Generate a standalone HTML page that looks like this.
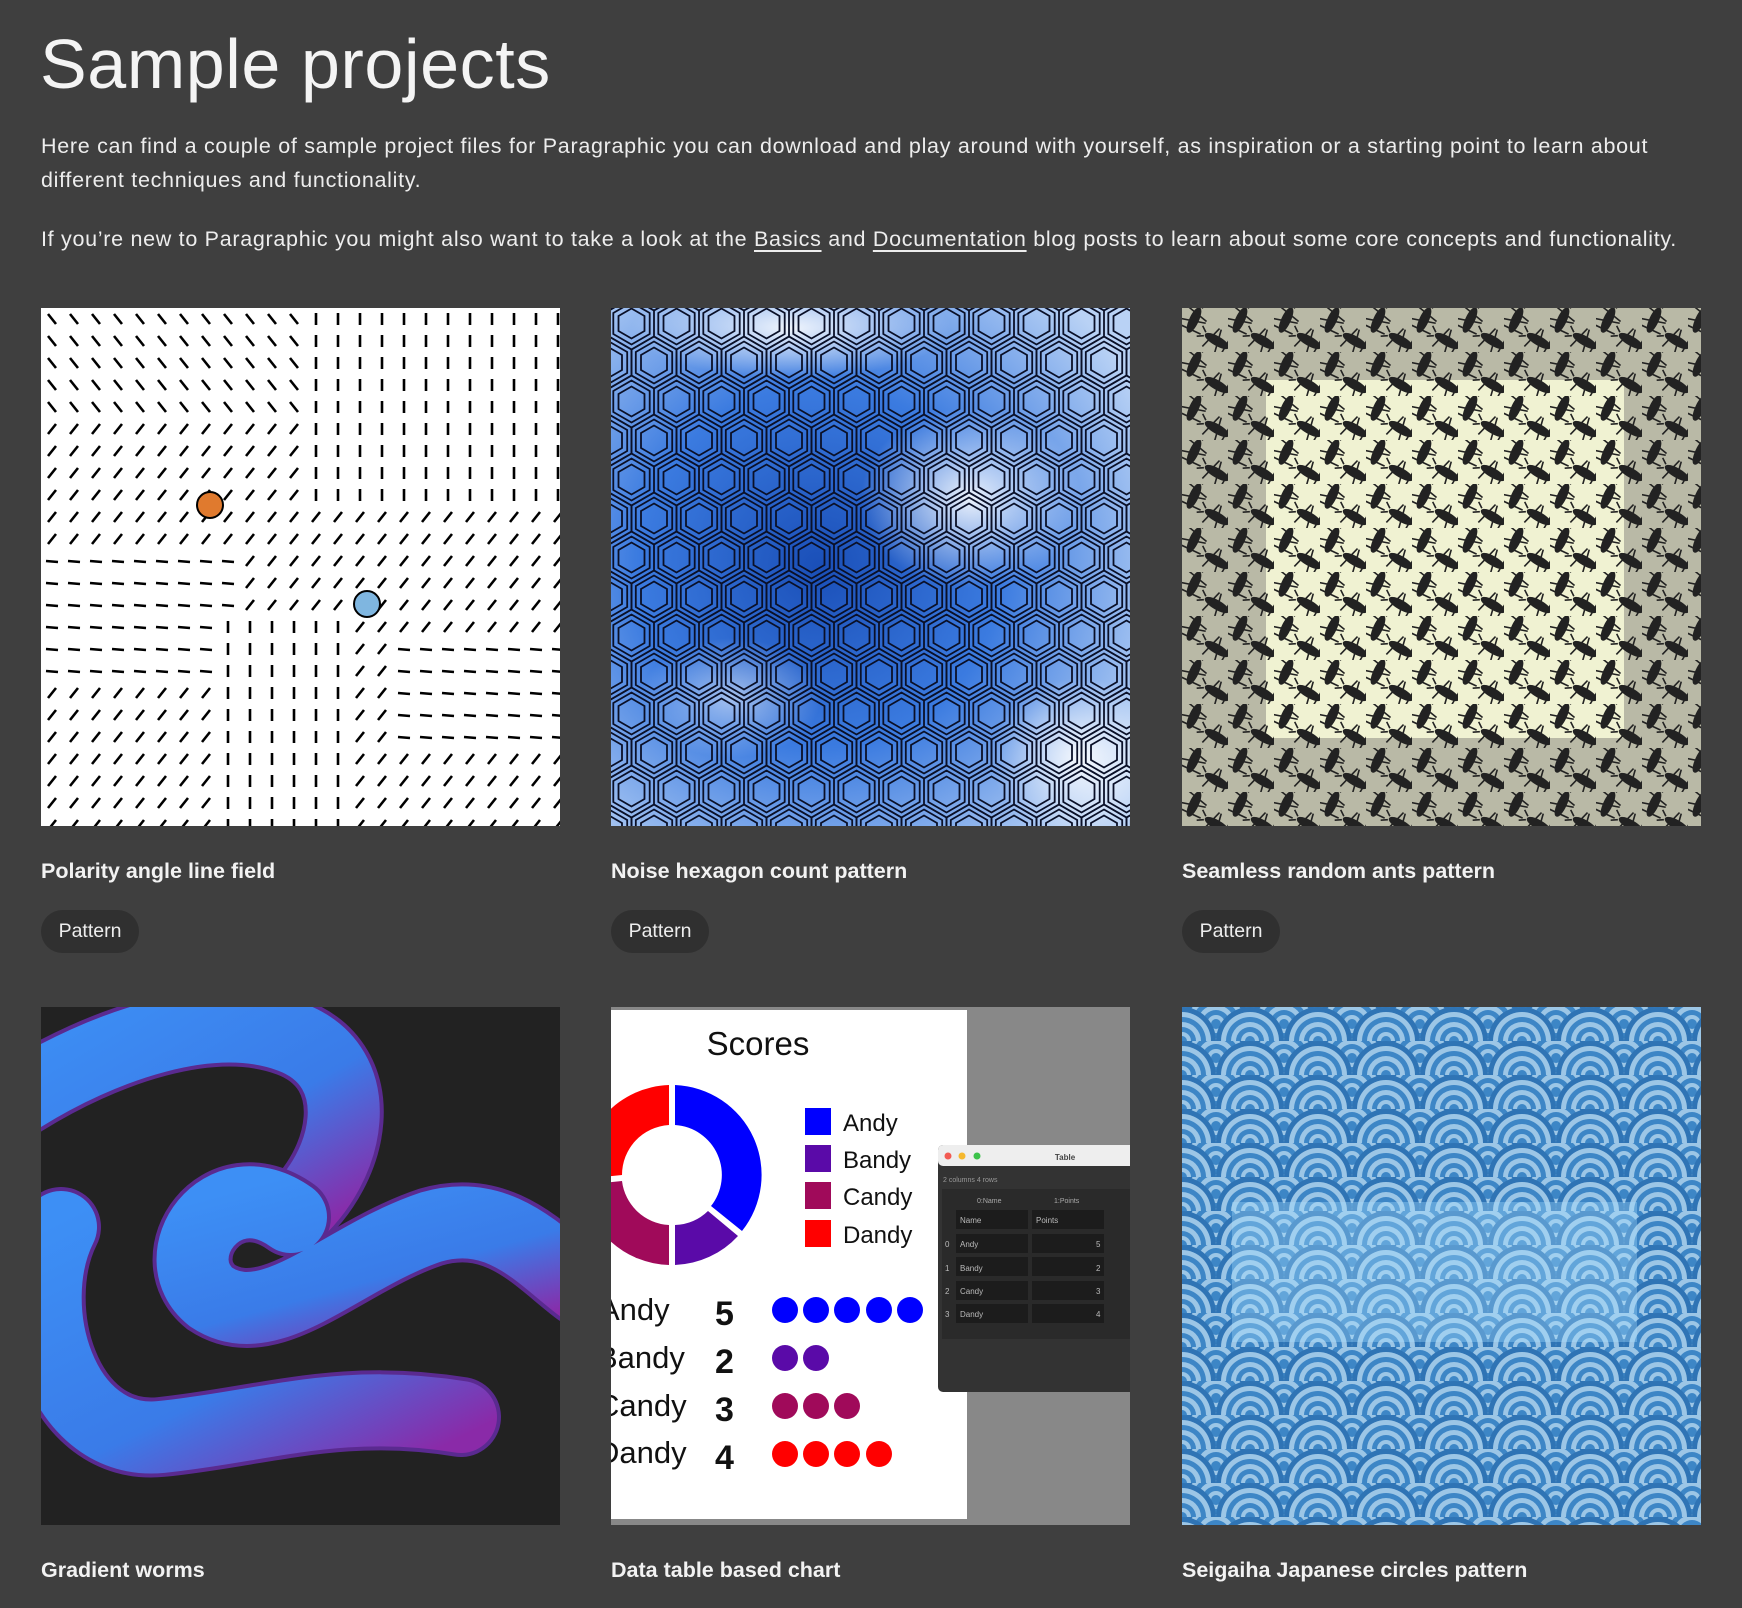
<!DOCTYPE html>
<html><head><meta charset="utf-8">
<style>
html,body{margin:0;padding:0;background:#3f3f3f;}
body{width:1742px;height:1608px;overflow:hidden;position:relative;font-family:"Liberation Sans",sans-serif;color:#f2f2f2;}
h1{position:absolute;left:40px;top:24px;margin:0;font-size:70px;font-weight:normal;letter-spacing:0.6px;color:#f4f4f4;}
p{position:absolute;left:41px;margin:0;font-size:21.5px;line-height:34px;color:#ededed;width:1680px;letter-spacing:0.7px;}
a{color:#ededed;text-decoration:underline;text-underline-offset:4px;}
.img{position:absolute;width:519px;height:518px;overflow:hidden;}
.img svg{display:block;}
.t{position:absolute;font-size:21.5px;font-weight:bold;color:#f2f2f2;}
.pill{position:absolute;height:43px;width:98px;border-radius:22px;background:#303030;color:#ededed;font-size:19.5px;line-height:43px;text-align:center;}
</style></head><body>
<h1>Sample projects</h1>
<p style="top:129px">Here can find a couple of sample project files for Paragraphic you can download and play around with yourself, as inspiration or a starting point to learn about different techniques and functionality.</p>
<p style="top:222px">If you’re new to Paragraphic you might also want to take a look at the <a>Basics</a> and <a>Documentation</a> blog posts to learn about some core concepts and functionality.</p>

<!-- Card 1 -->
<div class="img" style="left:41px;top:308px;background:#fff">
<svg width="519" height="518"><defs>
<pattern id="d1" width="22" height="22" patternUnits="userSpaceOnUse"><line x1="7" y1="16" x2="15" y2="6" stroke="#000" stroke-width="2.6"/></pattern>
<pattern id="d2" width="22" height="22" patternUnits="userSpaceOnUse"><line x1="11" y1="5" x2="11" y2="17" stroke="#000" stroke-width="2.6"/></pattern>
<pattern id="d3" width="22" height="22" patternUnits="userSpaceOnUse"><line x1="5" y1="11" x2="17" y2="12" stroke="#000" stroke-width="2.6"/></pattern>
<pattern id="d4" width="22" height="22" patternUnits="userSpaceOnUse"><line x1="7" y1="6" x2="15" y2="16" stroke="#000" stroke-width="2.6"/></pattern>
</defs>
<rect width="519" height="518" fill="url(#d1)"/>
<rect x="0" y="0" width="264" height="110" fill="#fff"/><rect x="0" y="0" width="264" height="110" fill="url(#d4)"/>
<rect x="264" y="0" width="255" height="198" fill="#fff"/><rect x="264" y="0" width="255" height="198" fill="url(#d2)"/>
<rect x="0" y="242" width="198" height="132" fill="#fff"/><rect x="0" y="242" width="198" height="132" fill="url(#d3)"/>
<rect x="352" y="330" width="167" height="110" fill="#fff"/><rect x="352" y="330" width="167" height="110" fill="url(#d3)"/>
<rect x="176" y="308" width="132" height="210" fill="#fff"/><rect x="176" y="308" width="132" height="210" fill="url(#d2)"/>
<circle cx="169" cy="197" r="13" fill="#e07a2e" stroke="#000" stroke-width="2"/>
<circle cx="326" cy="296" r="13" fill="#7fb6e0" stroke="#000" stroke-width="2"/>
</svg></div>
<div class="t" style="left:41px;top:859px">Polarity angle line field</div>
<div class="pill" style="left:41px;top:910px">Pattern</div>

<!-- Card 2 -->
<div class="img" style="left:611px;top:308px">
<svg width="520" height="518"><defs>
<radialGradient id="hb" cx="0.4" cy="0.5" r="0.7"><stop offset="0" stop-color="#1a4fb8"/><stop offset="0.5" stop-color="#3b7be0"/><stop offset="1" stop-color="#b9d2f5"/></radialGradient>
<radialGradient id="hw" cx="0.5" cy="0.5" r="0.5"><stop offset="0" stop-color="#fff" stop-opacity="0.9"/><stop offset="1" stop-color="#fff" stop-opacity="0"/></radialGradient>
<g id="hx1"><polygon points="0,-26 22.5,-13 22.5,13 0,26 -22.5,13 -22.5,-13"/><polygon points="0,-21 18.2,-10.5 18.2,10.5 0,21 -18.2,10.5 -18.2,-10.5"/><polygon points="0,-15 13,-7.5 13,7.5 0,15 -13,7.5 -13,-7.5"/></g>
<pattern id="hx" width="45" height="78" patternUnits="userSpaceOnUse" x="-2" y="-4">
<g fill="none" stroke="#0a1028" stroke-width="1.8">
<use href="#hx1" x="22.5" y="19.5"/>
<use href="#hx1" x="0" y="58.5"/><use href="#hx1" x="45" y="58.5"/>
<use href="#hx1" x="0" y="-19.5"/><use href="#hx1" x="45" y="-19.5"/>
<use href="#hx1" x="22.5" y="97.5"/>
</g></pattern></defs>
<rect width="520" height="518" fill="url(#hb)"/>
<ellipse cx="360" cy="190" rx="110" ry="90" fill="url(#hw)"/>
<ellipse cx="180" cy="20" rx="160" ry="50" fill="url(#hw)"/>
<ellipse cx="470" cy="450" rx="90" ry="80" fill="url(#hw)"/>
<ellipse cx="120" cy="390" rx="90" ry="60" fill="url(#hw)" opacity="0.6"/>
<rect width="520" height="518" fill="url(#hx)"/>
</svg></div>
<div class="t" style="left:611px;top:859px">Noise hexagon count pattern</div>
<div class="pill" style="left:611px;top:910px">Pattern</div>

<!-- Card 3 -->
<div class="img" style="left:1182px;top:308px;background:#b9b9a6">
<svg width="519" height="518"><defs>
<g id="a1" stroke="#222" stroke-width="1.6" fill="#222">
<ellipse cx="0" cy="0" rx="4" ry="13"/>
<line x1="-12" y1="-10" x2="12" y2="-4"/><line x1="-12" y1="4" x2="12" y2="-2"/><line x1="-12" y1="10" x2="12" y2="10"/>
<line x1="-2" y1="-14" x2="-6" y2="-20"/><line x1="2" y1="-14" x2="6" y2="-20"/></g>
<pattern id="ant" width="46" height="44" patternUnits="userSpaceOnUse">
<use href="#a1" transform="translate(12,12) rotate(25)"/>
<use href="#a1" transform="translate(35,33) rotate(-60)"/>
</pattern></defs>
<rect x="84" y="72" width="358" height="358" fill="#f0f2d2"/>
<rect width="519" height="518" fill="url(#ant)"/>
</svg></div>
<div class="t" style="left:1182px;top:859px">Seamless random ants pattern</div>
<div class="pill" style="left:1182px;top:910px">Pattern</div>

<!-- Card 4 -->
<div class="img" style="left:41px;top:1007px;background:#222">
<svg width="519" height="518"><defs>
<linearGradient id="wg" x1="0" y1="0" x2="1" y2="1"><stop offset="0" stop-color="#3d8ff5"/><stop offset="0.6" stop-color="#3a7be8"/><stop offset="1" stop-color="#8a2aa8"/></linearGradient>
</defs>
<g fill="none" stroke-linecap="round">
<path d="M-20,90 C60,40 170,0 250,30 C330,60 310,160 250,210" stroke="#5a2a90" stroke-width="80"/>
<path d="M-20,90 C60,40 170,0 250,30 C330,60 310,160 250,210" stroke="url(#wg)" stroke-width="72"/>
<path d="M250,210 C180,160 120,250 170,290 C230,330 300,250 390,220 C460,200 500,250 540,280" stroke="#5a2a90" stroke-width="80"/>
<path d="M250,210 C180,160 120,250 170,290 C230,330 300,250 390,220 C460,200 500,250 540,280" stroke="url(#wg)" stroke-width="72"/>
<path d="M20,220 C-20,300 20,440 120,430 C220,420 300,390 420,410" stroke="#5a2a90" stroke-width="80"/>
<path d="M20,220 C-20,300 20,440 120,430 C220,420 300,390 420,410" stroke="url(#wg)" stroke-width="72"/>
</g></svg></div>
<div class="t" style="left:41px;top:1558px">Gradient worms</div>

<!-- Card 5 -->
<div class="img" style="left:611px;top:1007px;background:#888">
<svg width="520" height="518" font-family="Liberation Sans, sans-serif">
<rect x="0" y="3" width="356" height="509" fill="#fff"/>
<text x="147" y="48" font-size="33" text-anchor="middle" fill="#111">Scores</text>
<g transform="translate(61,168)">
<path d="M3,-90 A90,90 0 0 1 70,56 L39,31 A50,50 0 0 0 3,-50 Z" fill="#0000ff"/>
<path d="M66,61 A90,90 0 0 1 3,90 L3,50 A50,50 0 0 0 36,36 Z" fill="#5a0aa8"/>
<path d="M-3,90 A90,90 0 0 1 -90,10 L-50,6 A50,50 0 0 0 -3,50 Z" fill="#a00a5a"/>
<path d="M-90,4 A90,90 0 0 1 -3,-90 L-3,-50 A50,50 0 0 0 -50,0 Z" fill="#ff0000"/>
</g>
<rect x="194" y="101" width="26" height="27" fill="#0000ff"/>
<rect x="194" y="138" width="26" height="27" fill="#5a0aa8"/>
<rect x="194" y="175" width="26" height="27" fill="#a00a5a"/>
<rect x="194" y="213" width="26" height="27" fill="#ff0000"/>
<g font-size="24" fill="#111"><text x="232" y="124">Andy</text><text x="232" y="161">Bandy</text><text x="232" y="198">Candy</text><text x="232" y="236">Dandy</text></g>
<g font-size="31" fill="#111"><text x="-12" y="313">Andy</text><text x="-14" y="361">Bandy</text><text x="-14" y="409">Candy</text><text x="-14" y="456">Dandy</text></g>
<g font-size="34" font-weight="bold" fill="#111"><text x="104" y="318">5</text><text x="104" y="366">2</text><text x="104" y="414">3</text><text x="104" y="462">4</text></g>
<g fill="#0000ff"><circle cx="174" cy="303" r="13"/><circle cx="205" cy="303" r="13"/><circle cx="236" cy="303" r="13"/><circle cx="268" cy="303" r="13"/><circle cx="299" cy="303" r="13"/></g>
<g fill="#5a0aa8"><circle cx="174" cy="351" r="13"/><circle cx="205" cy="351" r="13"/></g>
<g fill="#a00a5a"><circle cx="174" cy="399" r="13"/><circle cx="205" cy="399" r="13"/><circle cx="236" cy="399" r="13"/></g>
<g fill="#ff0000"><circle cx="174" cy="447" r="13"/><circle cx="205" cy="447" r="13"/><circle cx="236" cy="447" r="13"/><circle cx="268" cy="447" r="13"/></g>
<rect x="327" y="138" width="200" height="247" rx="5" fill="#333"/>
<rect x="327" y="138" width="200" height="21" rx="5" fill="#eee"/>
<circle cx="337" cy="149" r="3.5" fill="#f25a52"/><circle cx="351" cy="149" r="3.5" fill="#f5b82e"/><circle cx="366" cy="149" r="3.5" fill="#3cc24a"/>
<text x="454" y="153" font-size="8" font-weight="bold" fill="#444" text-anchor="middle">Table</text>
<text x="332" y="175" font-size="7" fill="#999">2 columns 4 rows</text>
<rect x="331" y="182" width="189" height="150" fill="#2a2a2a"/>
<g font-size="7" fill="#aaa"><text x="366" y="196">0:Name</text><text x="443" y="196">1:Points</text></g>
<g fill="#1c1c1c"><rect x="345" y="203" width="72" height="19"/><rect x="421" y="203" width="72" height="19"/>
<rect x="345" y="227" width="72" height="19"/><rect x="421" y="227" width="72" height="19"/>
<rect x="345" y="250" width="72" height="19"/><rect x="421" y="250" width="72" height="19"/>
<rect x="345" y="274" width="72" height="19"/><rect x="421" y="274" width="72" height="19"/>
<rect x="345" y="297" width="72" height="19"/><rect x="421" y="297" width="72" height="19"/></g>
<g font-size="8" fill="#bbb"><text x="349" y="216">Name</text><text x="425" y="216">Points</text>
<text x="349" y="240">Andy</text><text x="349" y="264">Bandy</text><text x="349" y="287">Candy</text><text x="349" y="310">Dandy</text>
<text x="485" y="240">5</text><text x="485" y="264">2</text><text x="485" y="287">3</text><text x="485" y="310">4</text>
<text x="334" y="240">0</text><text x="334" y="264">1</text><text x="334" y="287">2</text><text x="334" y="310">3</text></g>
</svg></div>
<div class="t" style="left:611px;top:1558px">Data table based chart</div>

<!-- Card 6 -->
<div class="img" style="left:1182px;top:1007px;background:#2f74b5">
<svg width="519" height="518"><defs>
<g id="sc"><circle r="34" fill="#2f74b5"/><circle r="29" fill="#9cc6e6"/><circle r="24" fill="#3d86c6"/><circle r="19" fill="#9cc6e6"/><circle r="14" fill="#3d86c6"/><circle r="9" fill="#9cc6e6"/><circle r="5" fill="#3d86c6"/></g>
<pattern id="sg" width="68" height="34" patternUnits="userSpaceOnUse">
<use href="#sc" x="0" y="0"/><use href="#sc" x="68" y="0"/>
<use href="#sc" x="34" y="17"/>
<use href="#sc" x="0" y="34"/><use href="#sc" x="68" y="34"/>
</pattern></defs>
<rect width="519" height="518" fill="url(#sg)"/>
<rect x="50" y="195" width="405" height="140" fill="#a8e0ff" opacity="0.35"/>
</svg></div>
<div class="t" style="left:1182px;top:1558px">Seigaiha Japanese circles pattern</div>
</body></html>
